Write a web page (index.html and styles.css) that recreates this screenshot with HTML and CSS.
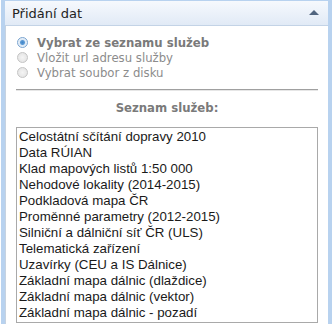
FILE: index.html
```html
<!DOCTYPE html>
<html lang="cs">
<head>
    <meta charset="UTF-8">
    <title>Přidání dat</title>
    <link rel="stylesheet" href="styles.css">
</head>
<body>
    <div class="panel">
        <div class="panel-head">
            <span class="panel-title">Přidání dat</span>
            <span class="collapse"></span>
        </div>
        <div class="panel-body">
            <div class="choice checked bold"><span class="radio"></span>Vybrat ze seznamu služeb</div>
            <div class="choice"><span class="radio"></span>Vložit url adresu služby</div>
            <div class="choice"><span class="radio"></span>Vybrat soubor z disku</div>
            <hr>
            <h4>Seznam služeb:</h4>
            <ul class="services">
                <li>Celostátní sčítání dopravy 2010</li>
                <li>Data RÚIAN</li>
                <li>Klad mapových listů 1:50 000</li>
                <li>Nehodové lokality (2014-2015)</li>
                <li>Podkladová mapa ČR</li>
                <li>Proměnné parametry (2012-2015)</li>
                <li>Silniční a dálniční síť ČR (ULS)</li>
                <li>Telematická zařízení</li>
                <li>Uzavírky (CEU a IS Dálnice)</li>
                <li>Základní mapa dálnic (dlaždice)</li>
                <li>Základní mapa dálnic (vektor)</li>
                <li>Základní mapa dálnic - pozadí</li>
            </ul>
        </div>
    </div>
</body>
</html>
```

FILE: styles.css
```css
body {
    margin: 0;
    background: #fff;
    font-family: "DejaVu Sans Condensed", "DejaVu Sans", sans-serif;
    overflow: hidden;
}
.panel {
    width: 323px;
    height: 330px;
    margin-left: 1px;
    border: 1px solid #b8d2ef;
    border-left-width: 4px;
    border-right-width: 4px;
    background: #d9e7f8;
}
.panel-head {
    height: 24px;
    display: flex;
    align-items: center;
    justify-content: space-between;
    padding: 0 9px 0 7px;
    background: linear-gradient(#f6f9fd, #e1eaf6);
}
.panel-title {
    font-family: "DejaVu Sans", sans-serif;
    font-size: 13px;
    color: #222;
}
.collapse {
    width: 0;
    height: 0;
    border-left: 5px solid transparent;
    border-right: 5px solid transparent;
    border-bottom: 5px solid #51657f;
    margin-top: -2px;
}
.panel-body {
    height: 310px;
    background: #fff;
    border-top: 1px solid #c3d3e6;
    border-left: 1px solid #c6d2e0;
    padding: 8px 10px 0 10px;
}
.choice {
    display: flex;
    align-items: center;
    height: 15px;
    font-size: 13px;
    color: #8c8c8c;
}
.choice.bold {
    font-weight: bold;
    color: #7a7a7a;
    height: 16px;
}
.radio {
    width: 11px;
    height: 11px;
    margin: 0 9px 0 1px;
    border: 1px solid #c4c4c4;
    border-radius: 50%;
    background: radial-gradient(#f4f4f4, #e0e0e0);
    box-sizing: border-box;
    flex-shrink: 0;
}
.checked .radio {
    border-color: #7aa4d0;
    background: radial-gradient(#3f86c9 0, #5d9ad4 2px, #dce9f6 3px, #eef4fa 5px);
}
hr {
    border: 0;
    border-top: 1px solid #a0a0a0;
    border-bottom: 1px solid #e6e6e6;
    margin: 9px 0 0 0;
}
h4 {
    margin: 9px 0 0 0;
    text-align: center;
    font-size: 13px;
    color: #7a7a7a;
}
.services {
    list-style: none;
    margin: 12px 0 0 0;
    padding: 1px 2px;
    border: 1px solid #a9a9a9;
    font-family: "Liberation Sans", Arial, sans-serif;
    font-size: 13.3px;
    line-height: 16px;
    color: #1a1a1a;
}
```
